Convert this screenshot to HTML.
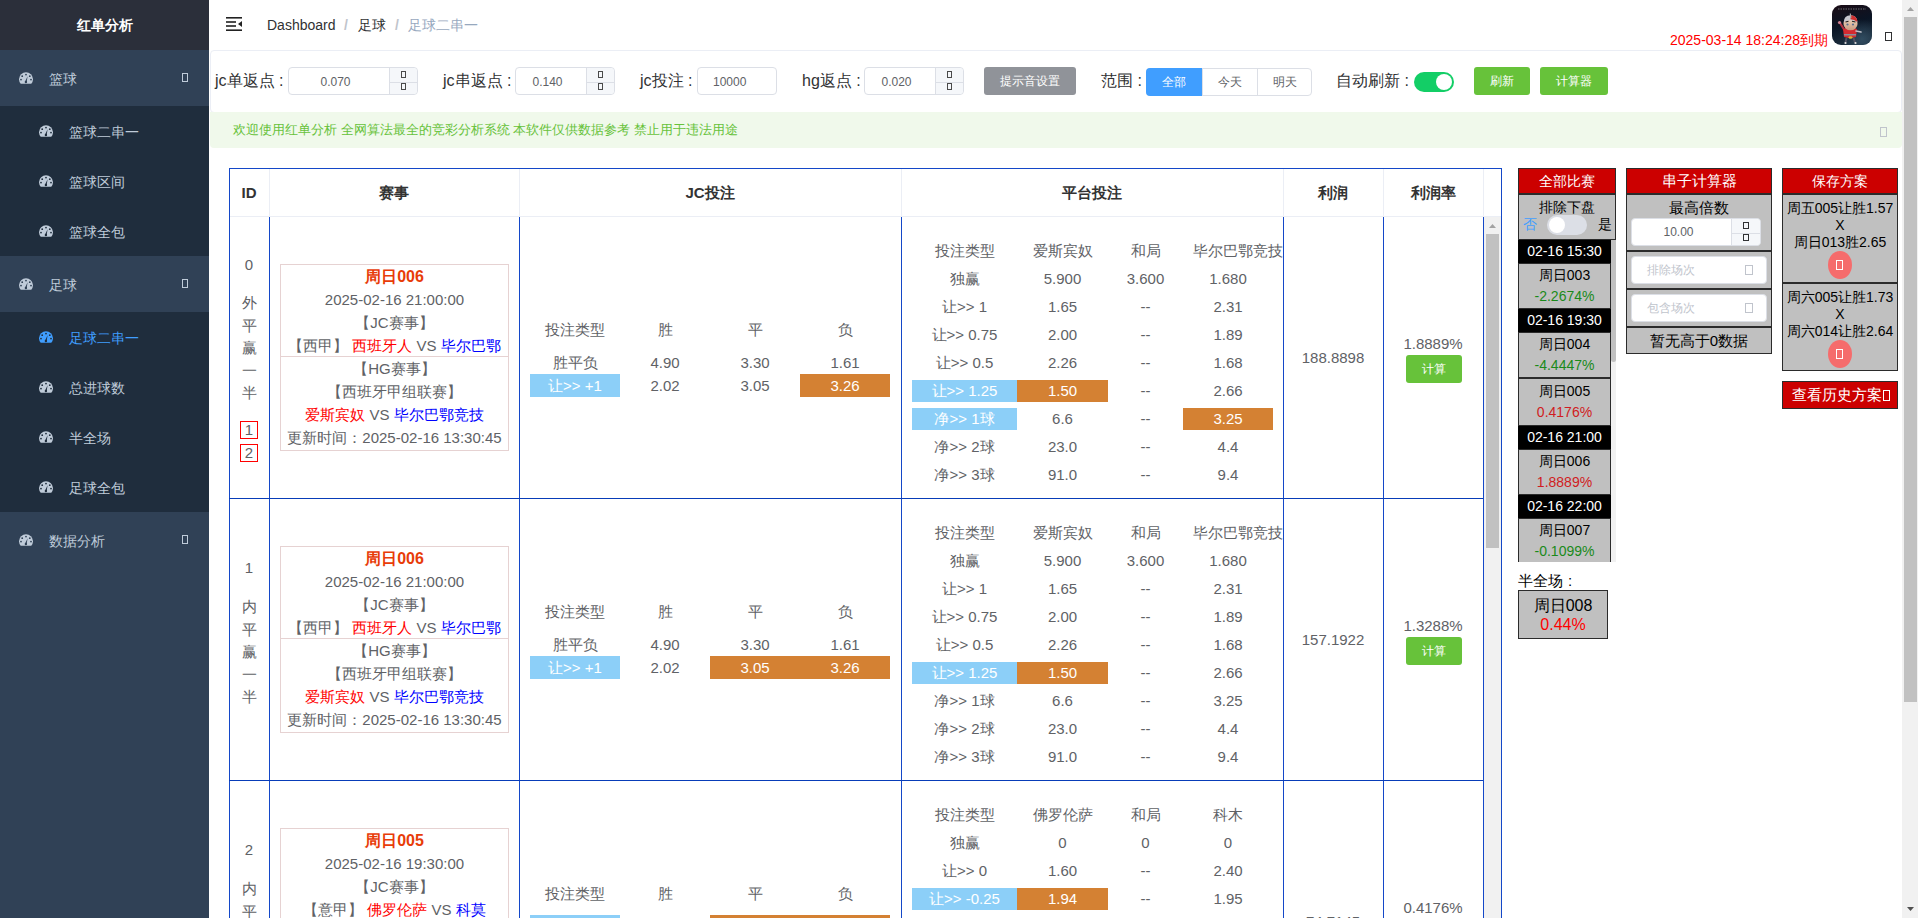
<!DOCTYPE html><html><head><meta charset="utf-8"><style>
*{box-sizing:border-box;margin:0;padding:0}
html,body{width:1918px;height:918px;overflow:hidden;background:#fff;font-family:"Liberation Sans",sans-serif;}
.abs{position:absolute}
.box{position:absolute;border:1px solid #606266;width:6px;height:9px}
/* sidebar */
#sb{position:absolute;left:0;top:0;width:209px;height:918px;background:#304156}
#logo{position:absolute;left:0;top:0;width:209px;height:50px;background:#2b2f3a;color:#fff;font-weight:bold;font-size:14px;text-align:center;line-height:50px}
.mi{position:absolute;left:0;width:209px;height:56px;color:#bfcbd9;font-size:14px;line-height:56px}
.sub{position:absolute;left:0;width:209px;background:#1f2d3d}
.si{position:absolute;left:0;width:209px;height:50px;color:#bfcbd9;font-size:14px;line-height:50px}
.ic{position:absolute;width:14px;height:12px}
/* header */
.crumb{position:absolute;top:16px;font-size:14px;line-height:18px;color:#303133;white-space:nowrap}
/* toolbar */
.lbl{position:absolute;top:69px;font-size:16px;line-height:24px;color:#303133;white-space:nowrap}
.inp{position:absolute;top:67px;height:28px;border:1px solid #dcdfe6;border-radius:4px;background:#fff;font-size:12px;color:#606266;line-height:28px}
.spin{position:absolute;right:0;top:0;width:28px;height:26px;background:#f5f7fa;border-left:1px solid #dcdfe6;border-radius:0 4px 4px 0}
.spin:after{content:"";position:absolute;left:0;right:0;top:14px;border-top:1px solid #dcdfe6}
.gb{position:absolute;top:67px;height:28px;border-radius:3px;color:#fff;font-size:12px;line-height:28px;text-align:center}
/* table */
.tcell{position:absolute;color:#606266;font-size:15px;text-align:center;white-space:nowrap}
.bl{position:absolute;background:#1448c8}
.it{position:absolute;border-collapse:collapse;table-layout:fixed}
.it td{text-align:center;color:#606266;font-size:15px;padding:0;white-space:nowrap}
.hl{background:#8dcdf8;color:#fff}
.og{background:#d4812f;color:#fff}
/* right panels */
.pn{position:absolute;border:1px solid #2b2b2b;background:#c0c0c0}
.ph{background:#cc0000;color:#fff;font-weight:bold;text-align:center;font-size:14px}
</style></head><body>
<div id="sb">
<div id="logo">红单分析</div>
<div class="mi" style="top:50px"><svg class="ic" style="left:19px;top:22px" viewBox="0 0 14 12"><path d="M1.72 11.8 A7 7 0 1 1 12.28 11.8 Z" fill="#bfcbd9"/><circle cx="7" cy="2.6" r="0.9" fill="#304156"/><circle cx="3.2" cy="4.2" r="0.9" fill="#304156"/><circle cx="10.8" cy="4.2" r="0.9" fill="#304156"/><circle cx="2" cy="7.6" r="0.9" fill="#304156"/><circle cx="12" cy="7.6" r="0.9" fill="#304156"/><path d="M6 9.8 L8.6 4.2 L7.6 10.3 Z" fill="#304156"/><circle cx="6.9" cy="10" r="1.2" fill="#304156"/></svg><span class="abs" style="left:49px;top:1px">篮球</span><span class="box" style="left:182px;top:23px;border-color:#bfcbd9;width:6px;height:9px"></span></div>
<div class="sub" style="top:106px;height:150px"></div>
<div class="si" style="top:106px;color:#bfcbd9"><svg class="ic" style="left:39px;top:19px" viewBox="0 0 14 12"><path d="M1.72 11.8 A7 7 0 1 1 12.28 11.8 Z" fill="#bfcbd9"/><circle cx="7" cy="2.6" r="0.9" fill="#1f2d3d"/><circle cx="3.2" cy="4.2" r="0.9" fill="#1f2d3d"/><circle cx="10.8" cy="4.2" r="0.9" fill="#1f2d3d"/><circle cx="2" cy="7.6" r="0.9" fill="#1f2d3d"/><circle cx="12" cy="7.6" r="0.9" fill="#1f2d3d"/><path d="M6 9.8 L8.6 4.2 L7.6 10.3 Z" fill="#1f2d3d"/><circle cx="6.9" cy="10" r="1.2" fill="#1f2d3d"/></svg><span class="abs" style="left:69px;top:1px">篮球二串一</span></div>
<div class="si" style="top:156px;color:#bfcbd9"><svg class="ic" style="left:39px;top:19px" viewBox="0 0 14 12"><path d="M1.72 11.8 A7 7 0 1 1 12.28 11.8 Z" fill="#bfcbd9"/><circle cx="7" cy="2.6" r="0.9" fill="#1f2d3d"/><circle cx="3.2" cy="4.2" r="0.9" fill="#1f2d3d"/><circle cx="10.8" cy="4.2" r="0.9" fill="#1f2d3d"/><circle cx="2" cy="7.6" r="0.9" fill="#1f2d3d"/><circle cx="12" cy="7.6" r="0.9" fill="#1f2d3d"/><path d="M6 9.8 L8.6 4.2 L7.6 10.3 Z" fill="#1f2d3d"/><circle cx="6.9" cy="10" r="1.2" fill="#1f2d3d"/></svg><span class="abs" style="left:69px;top:1px">篮球区间</span></div>
<div class="si" style="top:206px;color:#bfcbd9"><svg class="ic" style="left:39px;top:19px" viewBox="0 0 14 12"><path d="M1.72 11.8 A7 7 0 1 1 12.28 11.8 Z" fill="#bfcbd9"/><circle cx="7" cy="2.6" r="0.9" fill="#1f2d3d"/><circle cx="3.2" cy="4.2" r="0.9" fill="#1f2d3d"/><circle cx="10.8" cy="4.2" r="0.9" fill="#1f2d3d"/><circle cx="2" cy="7.6" r="0.9" fill="#1f2d3d"/><circle cx="12" cy="7.6" r="0.9" fill="#1f2d3d"/><path d="M6 9.8 L8.6 4.2 L7.6 10.3 Z" fill="#1f2d3d"/><circle cx="6.9" cy="10" r="1.2" fill="#1f2d3d"/></svg><span class="abs" style="left:69px;top:1px">篮球全包</span></div>
<div class="mi" style="top:256px"><svg class="ic" style="left:19px;top:22px" viewBox="0 0 14 12"><path d="M1.72 11.8 A7 7 0 1 1 12.28 11.8 Z" fill="#bfcbd9"/><circle cx="7" cy="2.6" r="0.9" fill="#304156"/><circle cx="3.2" cy="4.2" r="0.9" fill="#304156"/><circle cx="10.8" cy="4.2" r="0.9" fill="#304156"/><circle cx="2" cy="7.6" r="0.9" fill="#304156"/><circle cx="12" cy="7.6" r="0.9" fill="#304156"/><path d="M6 9.8 L8.6 4.2 L7.6 10.3 Z" fill="#304156"/><circle cx="6.9" cy="10" r="1.2" fill="#304156"/></svg><span class="abs" style="left:49px;top:1px">足球</span><span class="box" style="left:182px;top:23px;border-color:#bfcbd9;width:6px;height:9px"></span></div>
<div class="sub" style="top:312px;height:200px"></div>
<div class="si" style="top:312px;color:#409eff"><svg class="ic" style="left:39px;top:19px" viewBox="0 0 14 12"><path d="M1.72 11.8 A7 7 0 1 1 12.28 11.8 Z" fill="#409eff"/><circle cx="7" cy="2.6" r="0.9" fill="#1f2d3d"/><circle cx="3.2" cy="4.2" r="0.9" fill="#1f2d3d"/><circle cx="10.8" cy="4.2" r="0.9" fill="#1f2d3d"/><circle cx="2" cy="7.6" r="0.9" fill="#1f2d3d"/><circle cx="12" cy="7.6" r="0.9" fill="#1f2d3d"/><path d="M6 9.8 L8.6 4.2 L7.6 10.3 Z" fill="#1f2d3d"/><circle cx="6.9" cy="10" r="1.2" fill="#1f2d3d"/></svg><span class="abs" style="left:69px;top:1px">足球二串一</span></div>
<div class="si" style="top:362px;color:#bfcbd9"><svg class="ic" style="left:39px;top:19px" viewBox="0 0 14 12"><path d="M1.72 11.8 A7 7 0 1 1 12.28 11.8 Z" fill="#bfcbd9"/><circle cx="7" cy="2.6" r="0.9" fill="#1f2d3d"/><circle cx="3.2" cy="4.2" r="0.9" fill="#1f2d3d"/><circle cx="10.8" cy="4.2" r="0.9" fill="#1f2d3d"/><circle cx="2" cy="7.6" r="0.9" fill="#1f2d3d"/><circle cx="12" cy="7.6" r="0.9" fill="#1f2d3d"/><path d="M6 9.8 L8.6 4.2 L7.6 10.3 Z" fill="#1f2d3d"/><circle cx="6.9" cy="10" r="1.2" fill="#1f2d3d"/></svg><span class="abs" style="left:69px;top:1px">总进球数</span></div>
<div class="si" style="top:412px;color:#bfcbd9"><svg class="ic" style="left:39px;top:19px" viewBox="0 0 14 12"><path d="M1.72 11.8 A7 7 0 1 1 12.28 11.8 Z" fill="#bfcbd9"/><circle cx="7" cy="2.6" r="0.9" fill="#1f2d3d"/><circle cx="3.2" cy="4.2" r="0.9" fill="#1f2d3d"/><circle cx="10.8" cy="4.2" r="0.9" fill="#1f2d3d"/><circle cx="2" cy="7.6" r="0.9" fill="#1f2d3d"/><circle cx="12" cy="7.6" r="0.9" fill="#1f2d3d"/><path d="M6 9.8 L8.6 4.2 L7.6 10.3 Z" fill="#1f2d3d"/><circle cx="6.9" cy="10" r="1.2" fill="#1f2d3d"/></svg><span class="abs" style="left:69px;top:1px">半全场</span></div>
<div class="si" style="top:462px;color:#bfcbd9"><svg class="ic" style="left:39px;top:19px" viewBox="0 0 14 12"><path d="M1.72 11.8 A7 7 0 1 1 12.28 11.8 Z" fill="#bfcbd9"/><circle cx="7" cy="2.6" r="0.9" fill="#1f2d3d"/><circle cx="3.2" cy="4.2" r="0.9" fill="#1f2d3d"/><circle cx="10.8" cy="4.2" r="0.9" fill="#1f2d3d"/><circle cx="2" cy="7.6" r="0.9" fill="#1f2d3d"/><circle cx="12" cy="7.6" r="0.9" fill="#1f2d3d"/><path d="M6 9.8 L8.6 4.2 L7.6 10.3 Z" fill="#1f2d3d"/><circle cx="6.9" cy="10" r="1.2" fill="#1f2d3d"/></svg><span class="abs" style="left:69px;top:1px">足球全包</span></div>
<div class="mi" style="top:512px"><svg class="ic" style="left:19px;top:22px" viewBox="0 0 14 12"><path d="M1.72 11.8 A7 7 0 1 1 12.28 11.8 Z" fill="#bfcbd9"/><circle cx="7" cy="2.6" r="0.9" fill="#304156"/><circle cx="3.2" cy="4.2" r="0.9" fill="#304156"/><circle cx="10.8" cy="4.2" r="0.9" fill="#304156"/><circle cx="2" cy="7.6" r="0.9" fill="#304156"/><circle cx="12" cy="7.6" r="0.9" fill="#304156"/><path d="M6 9.8 L8.6 4.2 L7.6 10.3 Z" fill="#304156"/><circle cx="6.9" cy="10" r="1.2" fill="#304156"/></svg><span class="abs" style="left:49px;top:1px">数据分析</span><span class="box" style="left:182px;top:23px;border-color:#bfcbd9;width:6px;height:9px"></span></div>
</div>
<svg class="abs" style="left:226px;top:17px" width="16" height="14" viewBox="0 0 16 14"><rect x="0" y="0" width="16" height="1.6" fill="#222"/><rect x="0" y="4.2" width="10" height="1.6" fill="#222"/><rect x="0" y="8.2" width="10" height="1.6" fill="#222"/><rect x="0" y="12.4" width="16" height="1.6" fill="#222"/><path d="M16 4 L12 7 L16 10 Z" fill="#222"/></svg>
<div class="crumb" style="left:267px">Dashboard</div>
<div class="crumb" style="left:344px;color:#c0c4cc;font-weight:bold">/</div>
<div class="crumb" style="left:358px">足球</div>
<div class="crumb" style="left:395px;color:#c0c4cc;font-weight:bold">/</div>
<div class="crumb" style="left:408px;color:#97a8be">足球二串一</div>
<div class="abs" style="left:1670px;top:31px;font-size:14px;line-height:18px;color:#ff0000;white-space:nowrap">2025-03-14 18:24:28到期</div>
<svg class="abs" style="left:1832px;top:5px" width="40" height="40" viewBox="0 0 40 40"><defs><clipPath id="av"><rect width="40" height="40" rx="9"/></clipPath><linearGradient id="avg" x1="0" y1="0" x2="0.3" y2="1"><stop offset="0" stop-color="#1c0d16"/><stop offset="0.55" stop-color="#0a1424"/><stop offset="1" stop-color="#1b2c3c"/></linearGradient><radialGradient id="hz" cx="0.75" cy="0.85" r="0.5"><stop offset="0" stop-color="#3a5a70" stop-opacity="0.7"/><stop offset="1" stop-color="#3a5a70" stop-opacity="0"/></radialGradient><linearGradient id="fc" x1="0" y1="0" x2="0" y2="1"><stop offset="0" stop-color="#f0d8c0"/><stop offset="1" stop-color="#c89a80"/></linearGradient></defs><g clip-path="url(#av)"><rect width="40" height="40" fill="url(#avg)"/><rect width="40" height="40" fill="url(#hz)"/><path d="M6 4 H34" stroke="#bbb" stroke-width="0.8" stroke-dasharray="1.5 1" opacity="0.7"/><path d="M13 26 L8 18" stroke="#b03040" stroke-width="2.2" stroke-linecap="round"/><circle cx="7.5" cy="17.5" r="1.6" fill="#d08090"/><path d="M11 24 Q18 21 25 24 L24 32 Q18 34 12 32 Z" fill="#d42a30"/><rect x="12" y="29" width="12" height="1.5" fill="#8a8a9a"/><ellipse cx="18.5" cy="32.5" rx="2" ry="1.2" fill="#e0b030"/><path d="M24 26 L29 27" stroke="#c0c0c8" stroke-width="1.6" stroke-linecap="round"/><path d="M14.5 33 L13.5 37.5 M21.5 33 L23 37.5" stroke="#505060" stroke-width="2"/><circle cx="13.5" cy="38" r="1.1" fill="#ddd"/><circle cx="23.5" cy="38" r="1.1" fill="#ddd"/><ellipse cx="18.5" cy="19" rx="7" ry="6.3" fill="url(#fc)"/><path d="M11.8 17 Q12 10.5 18.5 10.3 Q25 10.5 25.5 17 Q18.5 13.5 11.8 17 Z" fill="#c8c8d0"/><path d="M18.5 10.3 Q25 10.5 25.5 17 Q22 14.5 18.5 14.3 Z" fill="#d03030"/><path d="M18.3 8.5 L18.8 13" stroke="#aaa" stroke-width="1.2"/><path d="M13.5 17 L16.5 16.2 M20 16.2 L23.5 17" stroke="#222" stroke-width="1.1"/><circle cx="15.5" cy="19.5" r="1.1" fill="#5a7090"/><circle cx="21" cy="19.5" r="1.1" fill="#5a7090"/></g></svg>
<span class="box" style="left:1885px;top:32px;width:7px;height:9px;border-color:#303133;border-width:1.3px"></span>
<div class="abs" style="left:210px;top:50px;width:1692px;height:63px;border:1px solid #ebeef5;border-radius:4px;background:#fff"></div>
<div class="abs" style="left:210px;top:112px;width:1692px;height:36px;background:#f0f9eb;border-radius:0 0 4px 4px"></div>
<div class="abs" style="left:233px;top:121px;font-size:13px;line-height:18px;color:#67c23a;white-space:nowrap">欢迎使用红单分析 全网算法最全的竞彩分析系统 本软件仅供数据参考 禁止用于违法用途</div>
<span class="box" style="left:1880px;top:127px;width:7px;height:10px;border-color:#c0c4cc"></span>
<div class="lbl" style="left:215px">jc单返点 :</div>
<div class="inp" style="left:288px;width:130px"><div class="abs" style="left:15px;right:50px;top:0;text-align:center">0.070</div><div class="spin"><span class="box" style="left:11px;top:3px;width:5px;height:7px;border-color:#4a4a4a"></span><span class="box" style="left:11px;top:15px;width:5px;height:7px;border-color:#4a4a4a"></span></div></div>
<div class="lbl" style="left:443px">jc串返点 :</div>
<div class="inp" style="left:515px;width:100px"><div class="abs" style="left:15px;right:50px;top:0;text-align:center">0.140</div><div class="spin"><span class="box" style="left:11px;top:3px;width:5px;height:7px;border-color:#4a4a4a"></span><span class="box" style="left:11px;top:15px;width:5px;height:7px;border-color:#4a4a4a"></span></div></div>
<div class="lbl" style="left:640px">jc投注 :</div>
<div class="inp" style="left:697px;width:80px"><div class="abs" style="left:15px;right:15px;top:0;text-align:left">10000</div></div>
<div class="lbl" style="left:802px">hg返点 :</div>
<div class="inp" style="left:864px;width:100px"><div class="abs" style="left:15px;right:50px;top:0;text-align:center">0.020</div><div class="spin"><span class="box" style="left:11px;top:3px;width:5px;height:7px;border-color:#4a4a4a"></span><span class="box" style="left:11px;top:15px;width:5px;height:7px;border-color:#4a4a4a"></span></div></div>
<div class="gb" style="left:984px;width:92px;background:#909399">提示音设置</div>
<div class="lbl" style="left:1101px">范围 :</div>
<div class="abs" style="left:1146px;top:68px;width:166px;height:28px;border:1px solid #dcdfe6;border-radius:4px;background:#fff;font-size:12px;line-height:26px;color:#606266"><div class="abs" style="left:-1px;top:-1px;width:56px;height:28px;background:#409eff;color:#fff;text-align:center;line-height:28px;border-radius:4px 0 0 4px">全部</div><div class="abs" style="left:55px;top:0;width:55px;text-align:center;border-left:1px solid #dcdfe6">今天</div><div class="abs" style="left:110px;top:0;width:55px;text-align:center;border-left:1px solid #dcdfe6">明天</div></div>
<div class="lbl" style="left:1336px">自动刷新 :</div>
<div class="abs" style="left:1414px;top:72px;width:40px;height:20px;border-radius:10px;background:#13ce66"><div class="abs" style="left:22px;top:2px;width:16px;height:16px;border-radius:8px;background:#fff"></div></div>
<div class="gb" style="left:1474px;width:56px;background:#67c23a">刷新</div>
<div class="gb" style="left:1540px;width:68px;background:#67c23a">计算器</div>
<div class="abs" style="left:1902px;top:0;width:16px;height:918px;background:#f1f1f1"></div>
<div class="abs" style="left:1904px;top:17px;width:13px;height:685px;background:#c1c1c1"></div>
<svg class="abs" style="left:1902px;top:0" width="17" height="17"><path d="M5 11 L8.5 7 L12 11 Z" fill="#a3a3a3"/></svg>
<svg class="abs" style="left:1902px;top:901px" width="17" height="17"><path d="M5 6 L8.5 10 L12 6 Z" fill="#505050"/></svg>
<div class="bl" style="left:229px;top:168px;width:1273px;height:1px"></div>
<div class="bl" style="left:229px;top:168px;width:1px;height:750px"></div>
<div class="bl" style="left:1501px;top:168px;width:1px;height:750px"></div>
<div class="abs" style="left:269px;top:169px;width:1px;height:47px;background:#ebeef5"></div>
<div class="abs" style="left:519px;top:169px;width:1px;height:47px;background:#ebeef5"></div>
<div class="abs" style="left:901px;top:169px;width:1px;height:47px;background:#ebeef5"></div>
<div class="abs" style="left:1283px;top:169px;width:1px;height:47px;background:#ebeef5"></div>
<div class="abs" style="left:1383px;top:169px;width:1px;height:47px;background:#ebeef5"></div>
<div class="abs" style="left:1483px;top:169px;width:1px;height:47px;background:#ebeef5"></div>
<div class="abs" style="left:230px;top:216px;width:1271px;height:1px;background:#ebeef5"></div>
<div class="tcell" style="left:229px;width:40px;top:182px;line-height:22px;font-weight:bold;color:#333">ID</div>
<div class="tcell" style="left:269px;width:250px;top:182px;line-height:22px;font-weight:bold;color:#333">赛事</div>
<div class="tcell" style="left:519px;width:382px;top:182px;line-height:22px;font-weight:bold;color:#333">JC投注</div>
<div class="tcell" style="left:901px;width:382px;top:182px;line-height:22px;font-weight:bold;color:#333">平台投注</div>
<div class="tcell" style="left:1283px;width:100px;top:182px;line-height:22px;font-weight:bold;color:#333">利润</div>
<div class="tcell" style="left:1383px;width:100px;top:182px;line-height:22px;font-weight:bold;color:#333">利润率</div>
<div class="bl" style="left:269px;top:217px;width:1px;height:701px"></div>
<div class="bl" style="left:519px;top:217px;width:1px;height:701px"></div>
<div class="bl" style="left:901px;top:217px;width:1px;height:701px"></div>
<div class="bl" style="left:1283px;top:217px;width:1px;height:701px"></div>
<div class="bl" style="left:1383px;top:217px;width:1px;height:701px"></div>
<div class="bl" style="left:1483px;top:217px;width:1px;height:701px"></div>
<div class="bl" style="left:229px;top:498px;width:1254px;height:1px;background:#083cb8"></div>
<div class="bl" style="left:229px;top:780px;width:1254px;height:1px;background:#083cb8"></div>
<div class="abs" style="left:1484px;top:217px;width:17px;height:701px;background:#f1f1f1"></div>
<div class="abs" style="left:1486px;top:234px;width:13px;height:314px;background:#c1c1c1"></div>
<svg class="abs" style="left:1484px;top:217px" width="17" height="17"><path d="M5 11 L8.5 7 L12 11 Z" fill="#a3a3a3"/></svg>
<div class="tcell" style="left:229px;width:40px;top:253px;line-height:23px">0</div>
<div class="tcell" style="left:229px;width:40px;top:291.0px;line-height:23px">外</div>
<div class="tcell" style="left:229px;width:40px;top:313.5px;line-height:23px">平</div>
<div class="tcell" style="left:229px;width:40px;top:336.0px;line-height:23px">赢</div>
<div class="tcell" style="left:229px;width:40px;top:358.5px;line-height:23px">一</div>
<div class="tcell" style="left:229px;width:40px;top:381.0px;line-height:23px">半</div>
<div class="abs" style="left:240px;top:421px;width:18px;height:18px;border:1px solid #ff0000;color:#606266;font-size:15px;line-height:16px;text-align:center">1</div>
<div class="abs" style="left:240px;top:444px;width:18px;height:18px;border:1px solid #ff0000;color:#606266;font-size:15px;line-height:16px;text-align:center">2</div>
<div class="abs" style="left:280px;top:264px;width:229px;height:187px;border:1px solid #e6d2d2;font-size:15px;line-height:23px;color:#606266;text-align:center;white-space:nowrap"><div style="height:92px;border-bottom:1px solid #e6d2d2"><div style="color:#e83c08;font-weight:bold;font-size:16px">周日006</div><div>2025-02-16 21:00:00</div><div>【JC赛事】</div><div>【西甲】 <span style="color:#ff0000">西班牙人</span> VS <span style="color:#0000ff">毕尔巴鄂</span></div></div><div>【HG赛事】</div><div>【西班牙甲组联赛】</div><div><span style="color:#ff0000">爱斯宾奴</span> VS <span style="color:#0000ff">毕尔巴鄂竞技</span></div><div>更新时间：2025-02-16 13:30:45</div></div>
<div class="tcell" style="left:530px;width:90px;top:318px;line-height:23px">投注类型</div>
<div class="tcell" style="left:620px;width:90px;top:318px;line-height:23px">胜</div>
<div class="tcell" style="left:710px;width:90px;top:318px;line-height:23px">平</div>
<div class="tcell" style="left:800px;width:90px;top:318px;line-height:23px">负</div>
<div class="tcell" style="left:530px;width:90px;top:351.0px;height:23px;line-height:23px;">胜平负</div>
<div class="tcell" style="left:620px;width:90px;top:351.0px;height:23px;line-height:23px;">4.90</div>
<div class="tcell" style="left:710px;width:90px;top:351.0px;height:23px;line-height:23px;">3.30</div>
<div class="tcell" style="left:800px;width:90px;top:351.0px;height:23px;line-height:23px;">1.61</div>
<div class="tcell" style="left:530px;width:90px;top:373.7px;height:23px;line-height:23px;background:#8ccff8;color:#fff;">让&gt;&gt; +1</div>
<div class="tcell" style="left:620px;width:90px;top:373.7px;height:23px;line-height:23px;">2.02</div>
<div class="tcell" style="left:710px;width:90px;top:373.7px;height:23px;line-height:23px;">3.05</div>
<div class="tcell" style="left:800px;width:90px;top:373.7px;height:23px;line-height:23px;background:#d48133;color:#fff;">3.26</div>
<div class="tcell" style="left:912px;width:105px;top:239px;line-height:24px">投注类型</div>
<div class="tcell" style="left:1017px;width:91px;top:239px;line-height:24px">爱斯宾奴</div>
<div class="tcell" style="left:1108px;width:75px;top:239px;line-height:24px">和局</div>
<div class="tcell" style="left:1193px;top:239px;line-height:24px;text-align:left">毕尔巴鄂竞技</div>
<div class="tcell" style="left:912px;width:105px;top:267.5px;height:22px;line-height:22px;">独赢</div>
<div class="tcell" style="left:1017px;width:91px;top:267.5px;height:22px;line-height:22px;">5.900</div>
<div class="tcell" style="left:1108px;width:75px;top:267.5px;height:22px;line-height:22px;">3.600</div>
<div class="tcell" style="left:1183px;width:90px;top:267.5px;height:22px;line-height:22px;">1.680</div>
<div class="tcell" style="left:912px;width:105px;top:295.5px;height:22px;line-height:22px;">让&gt;&gt; 1</div>
<div class="tcell" style="left:1017px;width:91px;top:295.5px;height:22px;line-height:22px;">1.65</div>
<div class="tcell" style="left:1108px;width:75px;top:295.5px;height:22px;line-height:22px;">--</div>
<div class="tcell" style="left:1183px;width:90px;top:295.5px;height:22px;line-height:22px;">2.31</div>
<div class="tcell" style="left:912px;width:105px;top:323.5px;height:22px;line-height:22px;">让&gt;&gt; 0.75</div>
<div class="tcell" style="left:1017px;width:91px;top:323.5px;height:22px;line-height:22px;">2.00</div>
<div class="tcell" style="left:1108px;width:75px;top:323.5px;height:22px;line-height:22px;">--</div>
<div class="tcell" style="left:1183px;width:90px;top:323.5px;height:22px;line-height:22px;">1.89</div>
<div class="tcell" style="left:912px;width:105px;top:351.5px;height:22px;line-height:22px;">让&gt;&gt; 0.5</div>
<div class="tcell" style="left:1017px;width:91px;top:351.5px;height:22px;line-height:22px;">2.26</div>
<div class="tcell" style="left:1108px;width:75px;top:351.5px;height:22px;line-height:22px;">--</div>
<div class="tcell" style="left:1183px;width:90px;top:351.5px;height:22px;line-height:22px;">1.68</div>
<div class="tcell" style="left:912px;width:105px;top:379.5px;height:22px;line-height:22px;background:#8ccff8;color:#fff;">让&gt;&gt; 1.25</div>
<div class="tcell" style="left:1017px;width:91px;top:379.5px;height:22px;line-height:22px;background:#d48133;color:#fff;">1.50</div>
<div class="tcell" style="left:1108px;width:75px;top:379.5px;height:22px;line-height:22px;">--</div>
<div class="tcell" style="left:1183px;width:90px;top:379.5px;height:22px;line-height:22px;">2.66</div>
<div class="tcell" style="left:912px;width:105px;top:407.5px;height:22px;line-height:22px;background:#8ccff8;color:#fff;">净&gt;&gt; 1球</div>
<div class="tcell" style="left:1017px;width:91px;top:407.5px;height:22px;line-height:22px;">6.6</div>
<div class="tcell" style="left:1108px;width:75px;top:407.5px;height:22px;line-height:22px;">--</div>
<div class="tcell" style="left:1183px;width:90px;top:407.5px;height:22px;line-height:22px;background:#d48133;color:#fff;">3.25</div>
<div class="tcell" style="left:912px;width:105px;top:435.5px;height:22px;line-height:22px;">净&gt;&gt; 2球</div>
<div class="tcell" style="left:1017px;width:91px;top:435.5px;height:22px;line-height:22px;">23.0</div>
<div class="tcell" style="left:1108px;width:75px;top:435.5px;height:22px;line-height:22px;">--</div>
<div class="tcell" style="left:1183px;width:90px;top:435.5px;height:22px;line-height:22px;">4.4</div>
<div class="tcell" style="left:912px;width:105px;top:463.5px;height:22px;line-height:22px;">净&gt;&gt; 3球</div>
<div class="tcell" style="left:1017px;width:91px;top:463.5px;height:22px;line-height:22px;">91.0</div>
<div class="tcell" style="left:1108px;width:75px;top:463.5px;height:22px;line-height:22px;">--</div>
<div class="tcell" style="left:1183px;width:90px;top:463.5px;height:22px;line-height:22px;">9.4</div>
<div class="tcell" style="left:1283px;width:100px;top:346px;line-height:23px">188.8898</div>
<div class="tcell" style="left:1383px;width:100px;top:332px;line-height:23px">1.8889%</div>
<div class="gb" style="left:1406px;top:355px;width:56px;background:#67c23a">计算</div>
<div class="tcell" style="left:229px;width:40px;top:556px;line-height:23px">1</div>
<div class="tcell" style="left:229px;width:40px;top:595.0px;line-height:23px">内</div>
<div class="tcell" style="left:229px;width:40px;top:617.5px;line-height:23px">平</div>
<div class="tcell" style="left:229px;width:40px;top:640.0px;line-height:23px">赢</div>
<div class="tcell" style="left:229px;width:40px;top:662.5px;line-height:23px">一</div>
<div class="tcell" style="left:229px;width:40px;top:685.0px;line-height:23px">半</div>
<div class="abs" style="left:280px;top:546px;width:229px;height:187px;border:1px solid #e6d2d2;font-size:15px;line-height:23px;color:#606266;text-align:center;white-space:nowrap"><div style="height:92px;border-bottom:1px solid #e6d2d2"><div style="color:#e83c08;font-weight:bold;font-size:16px">周日006</div><div>2025-02-16 21:00:00</div><div>【JC赛事】</div><div>【西甲】 <span style="color:#ff0000">西班牙人</span> VS <span style="color:#0000ff">毕尔巴鄂</span></div></div><div>【HG赛事】</div><div>【西班牙甲组联赛】</div><div><span style="color:#ff0000">爱斯宾奴</span> VS <span style="color:#0000ff">毕尔巴鄂竞技</span></div><div>更新时间：2025-02-16 13:30:45</div></div>
<div class="tcell" style="left:530px;width:90px;top:600px;line-height:23px">投注类型</div>
<div class="tcell" style="left:620px;width:90px;top:600px;line-height:23px">胜</div>
<div class="tcell" style="left:710px;width:90px;top:600px;line-height:23px">平</div>
<div class="tcell" style="left:800px;width:90px;top:600px;line-height:23px">负</div>
<div class="tcell" style="left:530px;width:90px;top:633.0px;height:23px;line-height:23px;">胜平负</div>
<div class="tcell" style="left:620px;width:90px;top:633.0px;height:23px;line-height:23px;">4.90</div>
<div class="tcell" style="left:710px;width:90px;top:633.0px;height:23px;line-height:23px;">3.30</div>
<div class="tcell" style="left:800px;width:90px;top:633.0px;height:23px;line-height:23px;">1.61</div>
<div class="tcell" style="left:530px;width:90px;top:655.7px;height:23px;line-height:23px;background:#8ccff8;color:#fff;">让&gt;&gt; +1</div>
<div class="tcell" style="left:620px;width:90px;top:655.7px;height:23px;line-height:23px;">2.02</div>
<div class="tcell" style="left:710px;width:90px;top:655.7px;height:23px;line-height:23px;background:#d48133;color:#fff;">3.05</div>
<div class="tcell" style="left:800px;width:90px;top:655.7px;height:23px;line-height:23px;background:#d48133;color:#fff;">3.26</div>
<div class="tcell" style="left:912px;width:105px;top:521px;line-height:24px">投注类型</div>
<div class="tcell" style="left:1017px;width:91px;top:521px;line-height:24px">爱斯宾奴</div>
<div class="tcell" style="left:1108px;width:75px;top:521px;line-height:24px">和局</div>
<div class="tcell" style="left:1193px;top:521px;line-height:24px;text-align:left">毕尔巴鄂竞技</div>
<div class="tcell" style="left:912px;width:105px;top:549.5px;height:22px;line-height:22px;">独赢</div>
<div class="tcell" style="left:1017px;width:91px;top:549.5px;height:22px;line-height:22px;">5.900</div>
<div class="tcell" style="left:1108px;width:75px;top:549.5px;height:22px;line-height:22px;">3.600</div>
<div class="tcell" style="left:1183px;width:90px;top:549.5px;height:22px;line-height:22px;">1.680</div>
<div class="tcell" style="left:912px;width:105px;top:577.5px;height:22px;line-height:22px;">让&gt;&gt; 1</div>
<div class="tcell" style="left:1017px;width:91px;top:577.5px;height:22px;line-height:22px;">1.65</div>
<div class="tcell" style="left:1108px;width:75px;top:577.5px;height:22px;line-height:22px;">--</div>
<div class="tcell" style="left:1183px;width:90px;top:577.5px;height:22px;line-height:22px;">2.31</div>
<div class="tcell" style="left:912px;width:105px;top:605.5px;height:22px;line-height:22px;">让&gt;&gt; 0.75</div>
<div class="tcell" style="left:1017px;width:91px;top:605.5px;height:22px;line-height:22px;">2.00</div>
<div class="tcell" style="left:1108px;width:75px;top:605.5px;height:22px;line-height:22px;">--</div>
<div class="tcell" style="left:1183px;width:90px;top:605.5px;height:22px;line-height:22px;">1.89</div>
<div class="tcell" style="left:912px;width:105px;top:633.5px;height:22px;line-height:22px;">让&gt;&gt; 0.5</div>
<div class="tcell" style="left:1017px;width:91px;top:633.5px;height:22px;line-height:22px;">2.26</div>
<div class="tcell" style="left:1108px;width:75px;top:633.5px;height:22px;line-height:22px;">--</div>
<div class="tcell" style="left:1183px;width:90px;top:633.5px;height:22px;line-height:22px;">1.68</div>
<div class="tcell" style="left:912px;width:105px;top:661.5px;height:22px;line-height:22px;background:#8ccff8;color:#fff;">让&gt;&gt; 1.25</div>
<div class="tcell" style="left:1017px;width:91px;top:661.5px;height:22px;line-height:22px;background:#d48133;color:#fff;">1.50</div>
<div class="tcell" style="left:1108px;width:75px;top:661.5px;height:22px;line-height:22px;">--</div>
<div class="tcell" style="left:1183px;width:90px;top:661.5px;height:22px;line-height:22px;">2.66</div>
<div class="tcell" style="left:912px;width:105px;top:689.5px;height:22px;line-height:22px;">净&gt;&gt; 1球</div>
<div class="tcell" style="left:1017px;width:91px;top:689.5px;height:22px;line-height:22px;">6.6</div>
<div class="tcell" style="left:1108px;width:75px;top:689.5px;height:22px;line-height:22px;">--</div>
<div class="tcell" style="left:1183px;width:90px;top:689.5px;height:22px;line-height:22px;">3.25</div>
<div class="tcell" style="left:912px;width:105px;top:717.5px;height:22px;line-height:22px;">净&gt;&gt; 2球</div>
<div class="tcell" style="left:1017px;width:91px;top:717.5px;height:22px;line-height:22px;">23.0</div>
<div class="tcell" style="left:1108px;width:75px;top:717.5px;height:22px;line-height:22px;">--</div>
<div class="tcell" style="left:1183px;width:90px;top:717.5px;height:22px;line-height:22px;">4.4</div>
<div class="tcell" style="left:912px;width:105px;top:745.5px;height:22px;line-height:22px;">净&gt;&gt; 3球</div>
<div class="tcell" style="left:1017px;width:91px;top:745.5px;height:22px;line-height:22px;">91.0</div>
<div class="tcell" style="left:1108px;width:75px;top:745.5px;height:22px;line-height:22px;">--</div>
<div class="tcell" style="left:1183px;width:90px;top:745.5px;height:22px;line-height:22px;">9.4</div>
<div class="tcell" style="left:1283px;width:100px;top:628px;line-height:23px">157.1922</div>
<div class="tcell" style="left:1383px;width:100px;top:614px;line-height:23px">1.3288%</div>
<div class="gb" style="left:1406px;top:637px;width:56px;background:#67c23a">计算</div>
<div class="tcell" style="left:229px;width:40px;top:838px;line-height:23px">2</div>
<div class="tcell" style="left:229px;width:40px;top:877.0px;line-height:23px">内</div>
<div class="tcell" style="left:229px;width:40px;top:899.5px;line-height:23px">平</div>
<div class="tcell" style="left:229px;width:40px;top:922.0px;line-height:23px">赢</div>
<div class="tcell" style="left:229px;width:40px;top:944.5px;line-height:23px">一</div>
<div class="tcell" style="left:229px;width:40px;top:967.0px;line-height:23px">半</div>
<div class="abs" style="left:280px;top:828px;width:229px;height:187px;border:1px solid #e6d2d2;font-size:15px;line-height:23px;color:#606266;text-align:center;white-space:nowrap"><div style="height:92px;border-bottom:1px solid #e6d2d2"><div style="color:#e83c08;font-weight:bold;font-size:16px">周日005</div><div>2025-02-16 19:30:00</div><div>【JC赛事】</div><div>【意甲】 <span style="color:#ff0000">佛罗伦萨</span> VS <span style="color:#0000ff">科莫</span></div></div><div>【HG赛事】</div><div>【意大利甲组联赛】</div><div><span style="color:#ff0000">佛罗伦萨</span> VS <span style="color:#0000ff">科莫</span></div><div>更新时间：2025-02-16 13:30:45</div></div>
<div class="tcell" style="left:530px;width:90px;top:882px;line-height:23px">投注类型</div>
<div class="tcell" style="left:620px;width:90px;top:882px;line-height:23px">胜</div>
<div class="tcell" style="left:710px;width:90px;top:882px;line-height:23px">平</div>
<div class="tcell" style="left:800px;width:90px;top:882px;line-height:23px">负</div>
<div class="tcell" style="left:530px;width:90px;top:915.0px;height:23px;line-height:23px;background:#8ccff8;color:#fff;">胜平负</div>
<div class="tcell" style="left:620px;width:90px;top:915.0px;height:23px;line-height:23px;">2.10</div>
<div class="tcell" style="left:710px;width:90px;top:915.0px;height:23px;line-height:23px;background:#d48133;color:#fff;">3.20</div>
<div class="tcell" style="left:800px;width:90px;top:915.0px;height:23px;line-height:23px;background:#d48133;color:#fff;">2.90</div>
<div class="tcell" style="left:530px;width:90px;top:937.7px;height:23px;line-height:23px;">让&gt;&gt; -1</div>
<div class="tcell" style="left:620px;width:90px;top:937.7px;height:23px;line-height:23px;">4.20</div>
<div class="tcell" style="left:710px;width:90px;top:937.7px;height:23px;line-height:23px;">3.60</div>
<div class="tcell" style="left:800px;width:90px;top:937.7px;height:23px;line-height:23px;">1.55</div>
<div class="tcell" style="left:912px;width:105px;top:803px;line-height:24px">投注类型</div>
<div class="tcell" style="left:1017px;width:91px;top:803px;line-height:24px">佛罗伦萨</div>
<div class="tcell" style="left:1108px;width:75px;top:803px;line-height:24px">和局</div>
<div class="tcell" style="left:1183px;width:90px;top:803px;line-height:24px">科木</div>
<div class="tcell" style="left:912px;width:105px;top:831.5px;height:22px;line-height:22px;">独赢</div>
<div class="tcell" style="left:1017px;width:91px;top:831.5px;height:22px;line-height:22px;">0</div>
<div class="tcell" style="left:1108px;width:75px;top:831.5px;height:22px;line-height:22px;">0</div>
<div class="tcell" style="left:1183px;width:90px;top:831.5px;height:22px;line-height:22px;">0</div>
<div class="tcell" style="left:912px;width:105px;top:859.5px;height:22px;line-height:22px;">让&gt;&gt; 0</div>
<div class="tcell" style="left:1017px;width:91px;top:859.5px;height:22px;line-height:22px;">1.60</div>
<div class="tcell" style="left:1108px;width:75px;top:859.5px;height:22px;line-height:22px;">--</div>
<div class="tcell" style="left:1183px;width:90px;top:859.5px;height:22px;line-height:22px;">2.40</div>
<div class="tcell" style="left:912px;width:105px;top:887.5px;height:22px;line-height:22px;background:#8ccff8;color:#fff;">让&gt;&gt; -0.25</div>
<div class="tcell" style="left:1017px;width:91px;top:887.5px;height:22px;line-height:22px;background:#d48133;color:#fff;">1.94</div>
<div class="tcell" style="left:1108px;width:75px;top:887.5px;height:22px;line-height:22px;">--</div>
<div class="tcell" style="left:1183px;width:90px;top:887.5px;height:22px;line-height:22px;">1.95</div>
<div class="tcell" style="left:912px;width:105px;top:915.5px;height:22px;line-height:22px;">让&gt;&gt; -0.5</div>
<div class="tcell" style="left:1017px;width:91px;top:915.5px;height:22px;line-height:22px;">2.20</div>
<div class="tcell" style="left:1108px;width:75px;top:915.5px;height:22px;line-height:22px;">--</div>
<div class="tcell" style="left:1183px;width:90px;top:915.5px;height:22px;line-height:22px;">1.70</div>
<div class="tcell" style="left:912px;width:105px;top:943.5px;height:22px;line-height:22px;">让&gt;&gt; -0.75</div>
<div class="tcell" style="left:1017px;width:91px;top:943.5px;height:22px;line-height:22px;">2.50</div>
<div class="tcell" style="left:1108px;width:75px;top:943.5px;height:22px;line-height:22px;">--</div>
<div class="tcell" style="left:1183px;width:90px;top:943.5px;height:22px;line-height:22px;">1.50</div>
<div class="tcell" style="left:912px;width:105px;top:971.5px;height:22px;line-height:22px;">净&gt;&gt; 1球</div>
<div class="tcell" style="left:1017px;width:91px;top:971.5px;height:22px;line-height:22px;">6.0</div>
<div class="tcell" style="left:1108px;width:75px;top:971.5px;height:22px;line-height:22px;">--</div>
<div class="tcell" style="left:1183px;width:90px;top:971.5px;height:22px;line-height:22px;">3.10</div>
<div class="tcell" style="left:1283px;width:100px;top:910px;line-height:23px">74.7145</div>
<div class="tcell" style="left:1383px;width:100px;top:896px;line-height:23px">0.4176%</div>
<div class="gb" style="left:1406px;top:919px;width:56px;background:#67c23a">计算</div>
<div class="abs" style="left:1518px;top:168px;width:98px;height:26px;border:1px solid #2b2b2b;background:#cc0000"><div style="color:#fff;font-size:14px;line-height:24px;text-align:center;font-weight:normal">全部比赛</div></div>
<div class="abs" style="left:1518px;top:194px;width:98px;height:46px;border:1px solid #2b2b2b;background:#c0c0c0"><div style="font-size:14px;line-height:18px;text-align:center;color:#000;margin-top:3px">排除下盘</div><div class="abs" style="left:3.5px;top:20px;font-size:14px;line-height:18px;color:#409eff">否</div><div class="abs" style="left:28px;top:20px;width:40px;height:20px;border-radius:10px;background:#dcdfe6"><div class="abs" style="left:2px;top:2px;width:16px;height:16px;border-radius:8px;background:#fff"></div></div><div class="abs" style="left:79px;top:20px;font-size:14px;line-height:18px;color:#000">是</div></div>
<div class="abs" style="left:1518px;top:240px;width:98px;height:322px;overflow:hidden">
<div class="abs" style="left:93px;top:0;width:5px;height:322px;background:#f1f1f1"></div>
<div class="abs" style="left:93px;top:0;width:5px;height:122px;background:#c1c1c1;border-radius:0 0 3px 3px"></div>
<div class="abs" style="left:0;top:0px;width:93px;height:23px;background:#000;color:#fff;font-size:14px;line-height:23px;text-align:center">02-16 15:30</div>
<div class="abs" style="left:0;top:23px;width:93px;height:46px;border:1px solid #2b2b2b;background:#c0c0c0;font-size:14px;line-height:21px;text-align:center;color:#000"><div style="margin-top:1px">周日003</div><div style="color:#1a8a1a">-2.2674%</div></div>
<div class="abs" style="left:0;top:69px;width:93px;height:23px;background:#000;color:#fff;font-size:14px;line-height:23px;text-align:center">02-16 19:30</div>
<div class="abs" style="left:0;top:92px;width:93px;height:46px;border:1px solid #2b2b2b;background:#c0c0c0;font-size:14px;line-height:21px;text-align:center;color:#000"><div style="margin-top:1px">周日004</div><div style="color:#1a8a1a">-4.4447%</div></div>
<div class="abs" style="left:0;top:138px;width:93px;height:48px;border:1px solid #2b2b2b;background:#c0c0c0;font-size:14px;line-height:21px;text-align:center;color:#000"><div style="margin-top:2px">周日005</div><div style="color:#d01c22">0.4176%</div></div>
<div class="abs" style="left:0;top:186px;width:93px;height:23px;background:#000;color:#fff;font-size:14px;line-height:23px;text-align:center">02-16 21:00</div>
<div class="abs" style="left:0;top:209px;width:93px;height:46px;border:1px solid #2b2b2b;background:#c0c0c0;font-size:14px;line-height:21px;text-align:center;color:#000"><div style="margin-top:1px">周日006</div><div style="color:#d01c22">1.8889%</div></div>
<div class="abs" style="left:0;top:255px;width:93px;height:23px;background:#000;color:#fff;font-size:14px;line-height:23px;text-align:center">02-16 22:00</div>
<div class="abs" style="left:0;top:278px;width:93px;height:60px;border:1px solid #2b2b2b;background:#c0c0c0;font-size:14px;line-height:21px;text-align:center;color:#000"><div style="margin-top:1px">周日007</div><div style="color:#1a8a1a">-0.1099%</div></div>
</div>
<div class="abs" style="left:1518px;top:571px;font-size:15px;line-height:20px;color:#000">半全场<span style="margin-left:5px">:</span></div>
<div class="abs" style="left:1518px;top:590px;width:90px;height:49px;border:1px solid #2b2b2b;background:#c0c0c0"><div style="font-size:16px;line-height:19px;text-align:center;color:#000;margin-top:5px">周日008</div><div style="font-size:16px;line-height:19px;text-align:center;color:#ff0000">0.44%</div></div>
<div class="abs" style="left:1626px;top:168px;width:146px;height:26px;border:1px solid #2b2b2b;background:#cc0000"><div style="color:#fff;font-size:15px;line-height:24px;text-align:center;font-weight:normal">串子计算器</div></div>
<div class="abs" style="left:1626px;top:194px;width:146px;height:57px;border:1px solid #2b2b2b;background:#c0c0c0"><div style="font-size:15px;line-height:20px;text-align:center;color:#000;margin-top:3px">最高倍数</div><div class="abs" style="left:4px;top:23px;width:130px;height:28px;background:#fff;border:1px solid #dcdfe6;border-radius:4px;font-size:12px;line-height:26px;color:#606266"><div class="abs" style="left:15px;right:50px;text-align:center">10.00</div><div class="spin" style="width:29px"><span class="box" style="left:11px;top:3px;width:6px;height:7px;border-color:#303133"></span><span class="box" style="left:11px;top:15px;width:6px;height:7px;border-color:#303133"></span></div></div></div>
<div class="abs" style="left:1626px;top:251px;width:146px;height:38px;border:1px solid #2b2b2b;background:#c0c0c0"><div class="abs" style="left:4px;top:4px;width:136px;height:28px;background:#fff;border:1px solid #dcdfe6;border-radius:4px;font-size:12px;line-height:26px;color:#c0c4cc"><span class="abs" style="left:15px">排除场次</span><span class="box" style="left:113px;top:8px;width:8px;height:10px;border-color:#c0c4cc"></span></div></div>
<div class="abs" style="left:1626px;top:289px;width:146px;height:38px;border:1px solid #2b2b2b;background:#c0c0c0"><div class="abs" style="left:4px;top:4px;width:136px;height:28px;background:#fff;border:1px solid #dcdfe6;border-radius:4px;font-size:12px;line-height:26px;color:#c0c4cc"><span class="abs" style="left:15px">包含场次</span><span class="box" style="left:113px;top:8px;width:8px;height:10px;border-color:#c0c4cc"></span></div></div>
<div class="abs" style="left:1626px;top:327px;width:146px;height:27px;border:1px solid #2b2b2b;background:#c0c0c0"><div style="font-size:15px;line-height:24px;text-align:center;color:#000;margin-top:1px">暂无高于0数据</div></div>
<div class="abs" style="left:1782px;top:168px;width:116px;height:26px;border:1px solid #2b2b2b;background:#cc0000"><div style="color:#fff;font-size:14px;line-height:24px;text-align:center;font-weight:normal">保存方案</div></div>
<div class="abs" style="left:1782px;top:194px;width:116px;height:89px;border:1px solid #2b2b2b;background:#c0c0c0"><div style="font-size:14px;line-height:17px;text-align:center;color:#000;margin-top:5px;white-space:nowrap">周五005让胜1.57<br>X<br>周日013胜2.65</div><div class="abs" style="left:45px;top:56px;width:24px;height:28px;border-radius:50%;background:#f56c6c"><span class="box" style="left:8px;top:9px;width:7px;height:10px;border-color:#fff"></span></div></div>
<div class="abs" style="left:1782px;top:283px;width:116px;height:88px;border:1px solid #2b2b2b;background:#c0c0c0"><div style="font-size:14px;line-height:17px;text-align:center;color:#000;margin-top:5px;white-space:nowrap">周六005让胜1.73<br>X<br>周六014让胜2.64</div><div class="abs" style="left:45px;top:56px;width:24px;height:28px;border-radius:50%;background:#f56c6c"><span class="box" style="left:8px;top:9px;width:7px;height:10px;border-color:#fff"></span></div></div>
<div class="abs" style="left:1782px;top:381px;width:116px;height:28px;border:1px solid #2b2b2b;background:#cc0000"><div style="font-size:15px;line-height:26px;text-align:left;padding-left:9px;color:#fff;white-space:nowrap">查看历史方案<span style="display:inline-block;width:7px;height:11px;border:1px solid #fff;vertical-align:-1px;margin-left:1px"></span></div></div>
</body></html>
